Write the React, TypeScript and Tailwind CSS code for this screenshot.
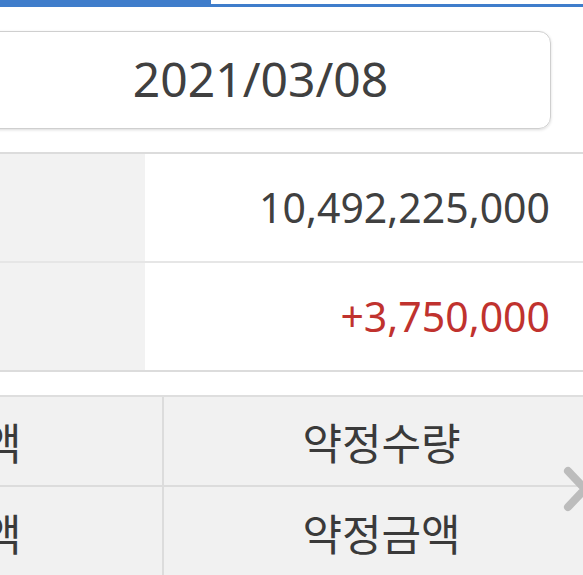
import React from "react";

export default function App() {
  const font = { fontFamily: '"Noto Sans", "Noto Sans CJK KR", sans-serif' };
  const kr = { fontFamily: '"Noto Sans CJK KR", "Noto Sans", sans-serif' };
  return (
    <div className="relative w-[583px] h-[575px] overflow-hidden bg-white" style={font}>
      <div className="flex items-end h-[7px]">
        <div className="w-[211px] h-[7px] bg-[#3f7dcb]" />
        <div className="flex-1 h-[3px] bg-[#3f7dcb]" />
      </div>
      <div className="pt-[24px] pr-[32px] pb-[23px]">
        <div className="-ml-[30px] h-[98px] rounded-[12px] border border-[#cfcfcf] shadow-[0_1px_3px_rgba(0,0,0,0.15)] flex items-center justify-center text-[48px] text-[#404040] pb-[3px]">
          2021/03/08
        </div>
      </div>
      <div className="border-t-2 border-[#dcdcdc]">
        <div className="flex h-[109px] border-b-2 border-[#e6e6e6]">
          <div className="w-[145px] bg-[#f2f2f2]" />
          <div className="flex-1 flex items-center justify-end pr-[33px] text-[41px] text-[#404040]">
            10,492,225,000
          </div>
        </div>
        <div className="flex h-[109px] border-b-2 border-[#dcdcdc]">
          <div className="w-[145px] bg-[#f2f2f2]" />
          <div className="flex-1 flex items-center justify-end pr-[33px] text-[41px] text-[#c0322e]">
            +3,750,000
          </div>
        </div>
      </div>
      <div className="h-[23px]" />
      <div className="border-t-2 border-[#dedede] bg-[#f1f1f1]" style={kr}>
        <div className="flex h-[90px] border-b-2 border-[#dcdcdc]">
          <div className="w-[164px] border-r-2 border-[#dcdcdc] flex items-center overflow-hidden text-[43px] text-[#3a3a3a]">
            <span className="-ml-[18px] whitespace-nowrap">액</span>
          </div>
          <div className="flex-1 flex items-center justify-center text-[43px] text-[#3a3a3a] pl-[16px]">
            약정수량
          </div>
        </div>
        <div className="flex h-[90px]">
          <div className="w-[164px] border-r-2 border-[#dcdcdc] flex items-center overflow-hidden text-[43px] text-[#3a3a3a]">
            <span className="-ml-[18px] whitespace-nowrap">액</span>
          </div>
          <div className="flex-1 flex items-center justify-center text-[43px] text-[#3a3a3a] pl-[16px]">
            약정금액
          </div>
        </div>
      </div>
      <svg className="absolute left-[560px] top-[466px]" width="34" height="46" viewBox="0 0 34 46">
        <path d="M8 5 L25 23 L8 41" fill="none" stroke="#bcbcbc" strokeWidth="8" strokeLinecap="round" strokeLinejoin="round" />
      </svg>
    </div>
  );
}
